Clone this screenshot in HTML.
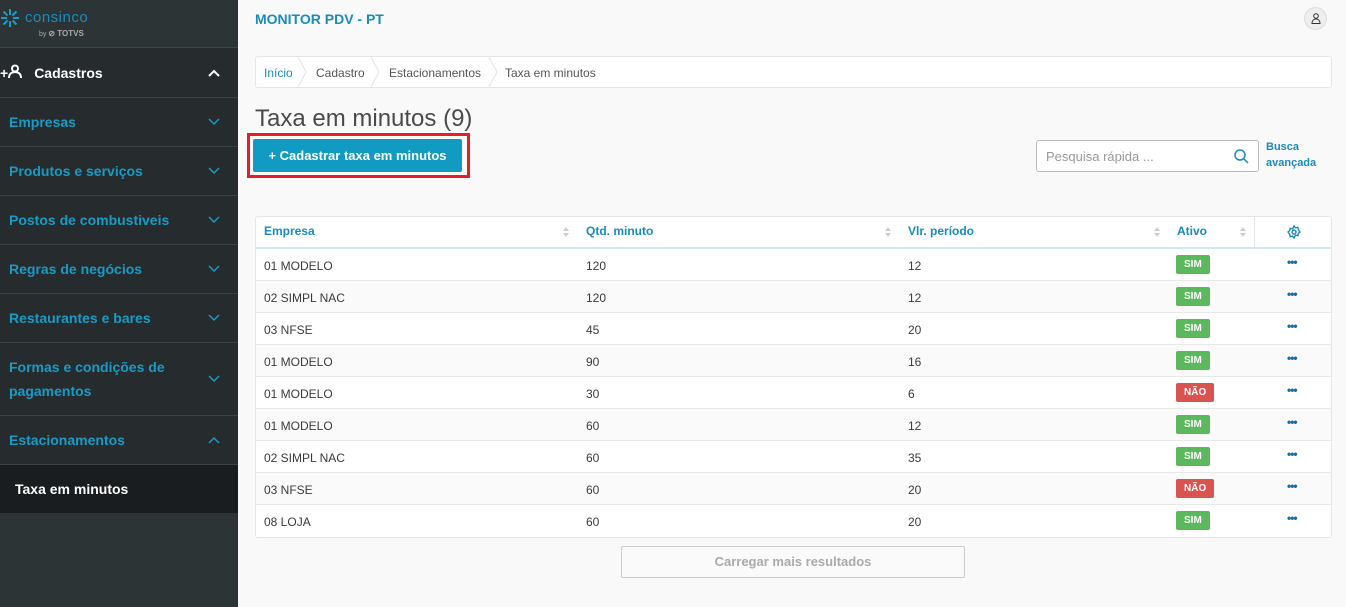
<!DOCTYPE html>
<html><head><meta charset="utf-8"><style>
*{box-sizing:border-box;margin:0;padding:0}
body{width:1346px;height:607px;overflow:hidden;font-family:"Liberation Sans",sans-serif;background:#f9f9f9;position:relative}
#sb{position:absolute;left:0;top:0;width:238px;height:607px;background:#2d3436}
.logo{height:48px;border-bottom:1px solid #3c4447;position:relative}
.it{position:absolute;left:0;width:238px;background:#262b2e;border-bottom:1px solid #3a4245;color:#1a9bc4;font-weight:bold;font-size:14px;padding-left:9px;display:flex;align-items:center}
.it .ch{position:absolute;right:18px;top:50%;margin-top:-4px}
#main{position:absolute;left:238px;top:0;right:0;bottom:0}
.bc{position:absolute;left:17px;top:56px;width:1077px;height:32px;background:#fff;border:1px solid #e6e6e6;border-radius:3px;font-size:12px;color:#555}
.bc span{position:absolute;top:9px}
.sep{position:absolute;top:0;width:10px;height:30px}
.tbl{position:absolute;left:17px;top:216px;width:1077px;background:#fff;border:1px solid #e6e6e6;border-radius:3px}
.row{position:relative;height:32px;border-bottom:1px solid #e8e8e8;font-size:12px;color:#3a3a3a}
.row span{position:absolute;top:10px}
.row:nth-child(even){background:#fafafa}
.hd{height:32px;position:relative;border-bottom:2px solid #cfe9f3;font-size:12px;font-weight:bold;color:#1a8cba}
.hd span{position:absolute;top:7px}
.badge{position:absolute;top:6px!important;left:920px;height:19px;line-height:19px;padding:0 8px;border-radius:2px;color:#fff;font-weight:bold;font-size:10px}
.dots{left:1031px;top:6px!important;font-weight:bold;color:#1a6fa0;font-size:12px;letter-spacing:-1px}
.srt{position:absolute;top:9px;width:6px;height:12px}
</style></head><body>
<div id="sb">
<div class="logo">
<svg style="position:absolute;left:0;top:8px" width="20" height="20" viewBox="0 0 20 20" stroke="#1a9bc4" stroke-width="2"><path d="M10 1v6M10 13v6M1 10h6M13 10h6M3.5 3.5l4 4M12.5 12.5l4 4M16.5 3.5l-4 4M7.5 12.5l-4 4"/></svg>
<div style="position:absolute;left:25px;top:9px;color:#1a8cba;font-size:15px;letter-spacing:0.5px">consinco</div>
<div style="position:absolute;left:39px;top:29px;color:#aaa;font-size:7px">by <b style="font-size:8px">⊘ TOTVS</b></div>
</div>
<div class="it" style="top:48px;height:50px;color:#fff;padding-left:0"><span style="font-size:14px;margin-right:12px">+<svg width="14" height="14" viewBox="0 0 14 14" fill="none" stroke="#fff" stroke-width="2"><circle cx="7" cy="4.5" r="3"/><path d="M1 14c0-4 2.5-6 6-6s6 2 6 6"/></svg></span>Cadastros<svg class="ch" width="12" height="8" viewBox="0 0 12 8"><path d="M1 7l5-5 5 5" stroke="#fff" stroke-width="2" fill="none"/></svg></div>
<div class="it" style="top:98px;height:49px">Empresas<svg class="ch" width="12" height="8" viewBox="0 0 12 8"><path d="M1 1l5 5 5-5" stroke="#1a9bc4" stroke-width="1.5" fill="none"/></svg></div>
<div class="it" style="top:147px;height:49px">Produtos e serviços<svg class="ch" width="12" height="8" viewBox="0 0 12 8"><path d="M1 1l5 5 5-5" stroke="#1a9bc4" stroke-width="1.5" fill="none"/></svg></div>
<div class="it" style="top:196px;height:49px">Postos de combustiveis<svg class="ch" width="12" height="8" viewBox="0 0 12 8"><path d="M1 1l5 5 5-5" stroke="#1a9bc4" stroke-width="1.5" fill="none"/></svg></div>
<div class="it" style="top:245px;height:49px">Regras de negócios<svg class="ch" width="12" height="8" viewBox="0 0 12 8"><path d="M1 1l5 5 5-5" stroke="#1a9bc4" stroke-width="1.5" fill="none"/></svg></div>
<div class="it" style="top:294px;height:49px">Restaurantes e bares<svg class="ch" width="12" height="8" viewBox="0 0 12 8"><path d="M1 1l5 5 5-5" stroke="#1a9bc4" stroke-width="1.5" fill="none"/></svg></div>
<div class="it" style="top:343px;height:73px;line-height:24px">Formas e condições de<br>pagamentos<svg class="ch" width="12" height="8" viewBox="0 0 12 8"><path d="M1 1l5 5 5-5" stroke="#1a9bc4" stroke-width="1.5" fill="none"/></svg></div>
<div class="it" style="top:416px;height:49px">Estacionamentos<svg class="ch" width="12" height="8" viewBox="0 0 12 8"><path d="M1 7l5-5 5 5" stroke="#1a9bc4" stroke-width="1.5" fill="none"/></svg></div>
<div class="it" style="top:465px;height:48px;background:#1a1d1f;color:#fff;padding-left:15px;border:0">Taxa em minutos</div>
</div>
<div id="main">
<div style="position:absolute;left:17px;top:11px;color:#1a8cba;font-weight:bold;font-size:14px">MONITOR PDV - PT</div>
<div style="position:absolute;left:1066px;top:7px;width:23px;height:23px;border-radius:50%;background:#eee;border:1px solid #ddd"><svg style="position:absolute;left:6px;top:5px" width="10" height="11" viewBox="0 0 10 11" fill="none" stroke="#333" stroke-width="1"><circle cx="5" cy="3" r="2.3"/><path d="M1 10.5c0-3 1.8-4.5 4-4.5s4 1.5 4 4.5z"/></svg></div>
<div class="bc">
<span style="left:8px;color:#1a8cba">Início</span>
<svg class="sep" style="left:41px" viewBox="0 0 10 30"><path d="M1 0l8 15-8 15" stroke="#e3e3e3" fill="none"/></svg>
<span style="left:60px">Cadastro</span>
<svg class="sep" style="left:114px" viewBox="0 0 10 30"><path d="M1 0l8 15-8 15" stroke="#e3e3e3" fill="none"/></svg>
<span style="left:133px">Estacionamentos</span>
<svg class="sep" style="left:232px" viewBox="0 0 10 30"><path d="M1 0l8 15-8 15" stroke="#e3e3e3" fill="none"/></svg>
<span style="left:249px">Taxa em minutos</span>
</div>
<div style="position:absolute;left:17px;top:105px;font-size:24px;color:#4a4a4a">Taxa em minutos (9)</div>
<div style="position:absolute;left:9px;top:133px;width:223px;height:45px;border:3px solid #e3202a"></div>
<div style="position:absolute;left:15px;top:139px;width:209px;height:33px;background:#129bc2;border-radius:2px;color:#fff;font-weight:bold;font-size:13px;line-height:33px;text-align:center">+ Cadastrar taxa em minutos</div>
<div style="position:absolute;left:798px;top:140px;width:223px;height:32px;background:#fff;border:1px solid #bbb;border-radius:3px"><span style="position:absolute;left:9px;top:8px;font-size:13px;color:#999">Pesquisa rápida ...</span><svg style="position:absolute;right:9px;top:8px" width="15" height="15" viewBox="0 0 15 15" fill="none" stroke="#1a8cba" stroke-width="1.5"><circle cx="6" cy="6" r="5"/><path d="M10 10l4 4"/></svg></div>
<div style="position:absolute;left:1028px;top:139px;font-size:11px;font-weight:bold;color:#1a8cba;line-height:16px">Busca<br>avançada</div>
<div class="tbl">
<div class="hd"><span style="left:8px">Empresa</span><svg class="srt" style="left:307px" viewBox="0 0 6 12" fill="#ccc"><path d="M0 5l3-4 3 4zM0 7l3 4 3-4z"/></svg><span style="left:330px">Qtd. minuto</span><svg class="srt" style="left:629px" viewBox="0 0 6 12" fill="#ccc"><path d="M0 5l3-4 3 4zM0 7l3 4 3-4z"/></svg><span style="left:652px">Vlr. período</span><svg class="srt" style="left:898px" viewBox="0 0 6 12" fill="#ccc"><path d="M0 5l3-4 3 4zM0 7l3 4 3-4z"/></svg><span style="left:921px">Ativo</span><svg class="srt" style="left:984px" viewBox="0 0 6 12" fill="#ccc"><path d="M0 5l3-4 3 4zM0 7l3 4 3-4z"/></svg><div style="position:absolute;left:998px;top:0;height:32px;border-left:1px solid #e6e6e6"></div><svg style="position:absolute;left:1031px;top:8px" width="14" height="14" viewBox="0 0 14 14" fill="none" stroke="#1a8cba" stroke-width="1.4"><circle cx="7" cy="7" r="2"/><path d="M7 1l1.5 1.8 2.3-.5.5 2.3L13 7l-1.7 1.4-.5 2.3-2.3-.5L7 13l-1.5-1.8-2.3.5-.5-2.3L1 7l1.7-1.4.5-2.3 2.3.5z"/></svg></div>
<div>
<div class="row"><span style="left:8px">01 MODELO</span><span style="left:330px">120</span><span style="left:652px">12</span><span class="badge" style="background:#5cb85c">SIM</span><span class="dots">•••</span></div>
<div class="row"><span style="left:8px">02 SIMPL NAC</span><span style="left:330px">120</span><span style="left:652px">12</span><span class="badge" style="background:#5cb85c">SIM</span><span class="dots">•••</span></div>
<div class="row"><span style="left:8px">03 NFSE</span><span style="left:330px">45</span><span style="left:652px">20</span><span class="badge" style="background:#5cb85c">SIM</span><span class="dots">•••</span></div>
<div class="row"><span style="left:8px">01 MODELO</span><span style="left:330px">90</span><span style="left:652px">16</span><span class="badge" style="background:#5cb85c">SIM</span><span class="dots">•••</span></div>
<div class="row"><span style="left:8px">01 MODELO</span><span style="left:330px">30</span><span style="left:652px">6</span><span class="badge" style="background:#d9534f">NÃO</span><span class="dots">•••</span></div>
<div class="row"><span style="left:8px">01 MODELO</span><span style="left:330px">60</span><span style="left:652px">12</span><span class="badge" style="background:#5cb85c">SIM</span><span class="dots">•••</span></div>
<div class="row"><span style="left:8px">02 SIMPL NAC</span><span style="left:330px">60</span><span style="left:652px">35</span><span class="badge" style="background:#5cb85c">SIM</span><span class="dots">•••</span></div>
<div class="row"><span style="left:8px">03 NFSE</span><span style="left:330px">60</span><span style="left:652px">20</span><span class="badge" style="background:#d9534f">NÃO</span><span class="dots">•••</span></div>
<div class="row" style="border-bottom:0"><span style="left:8px">08 LOJA</span><span style="left:330px">60</span><span style="left:652px">20</span><span class="badge" style="background:#5cb85c">SIM</span><span class="dots">•••</span></div>
</div></div>
<div style="position:absolute;left:383px;top:546px;width:344px;height:32px;border:1px solid #ccc;border-radius:2px;background:#fafafa;color:#aaa;font-weight:bold;font-size:13px;text-align:center;line-height:30px">Carregar mais resultados</div>
</div>
</body></html>
